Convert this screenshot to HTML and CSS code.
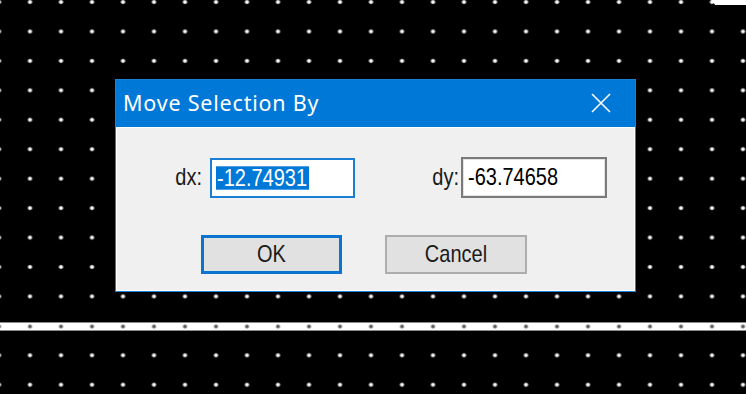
FILE: index.html
```html
<!DOCTYPE html>
<html lang="en">
<head>
    <meta charset="UTF-8">
    <title>Move Selection By</title>
    <link rel="stylesheet" href="styles.css">
</head>
<body>

    <!-- Drawing canvas -->
    <div class="canvas">
        <div class="corner-mark"></div>
        <div class="rule"></div>

        <!-- Dialog window -->
        <div class="dialog">
            <div class="titlebar">
                <span class="title">Move Selection By</span>
                <svg class="close" width="20" height="20" viewBox="0 0 20 20">
                    <path d="M1 1 L19 19 M19 1 L1 19" stroke="#fff" stroke-width="1.6" fill="none"/>
                </svg>
            </div>

            <div class="dialog-body">
                <div class="fields">
                    <div class="field field-dx">
                        <span class="label"><span class="tall">dx:</span></span>
                        <div class="input focused"><span class="tall selected">-12.74931</span></div>
                    </div>
                    <div class="field field-dy">
                        <span class="label"><span class="tall">dy:</span></span>
                        <div class="input"><span class="tall">-63.74658</span></div>
                    </div>
                </div>

                <div class="buttons">
                    <button class="btn default"><span class="tall">OK</span></button>
                    <button class="btn"><span class="tall">Cancel</span></button>
                </div>
            </div>
        </div>
    </div>

</body>
</html>
```

FILE: styles.css
```css
/* Page / canvas */
body {
    margin: 0;
    background: #000;
    overflow: hidden;
}

.canvas {
    position: relative;
    width: 746px;
    height: 394px;
    background-color: #000;
    background-image: radial-gradient(circle, #fff 0, #f4f4f4 1.1px, rgba(255, 255, 255, 0.55) 2px, transparent 2.6px);
    background-size: 31px 29.44px;
    background-position: 14.5px -12.7px;
}

/* White line drawn across the canvas */
.rule {
    position: absolute;
    left: 0;
    right: 0;
    top: 322px;
    height: 7px;
    background-color: #fff;
    border-top: 1px solid #8a8a8a;
    border-bottom: 1px solid #8a8a8a;
    background-image: radial-gradient(circle, #555 0, #666 1.2px, rgba(100, 100, 100, 0.45) 2px, transparent 2.6px);
    background-size: 31px 7px;
    background-position: 14.5px 0;
}

.corner-mark {
    position: absolute;
    top: 0;
    left: 711px;
    width: 35px;
    height: 5px;
    background: #fff;
    clip-path: polygon(0 0, 100% 0, 100% 100%, 12% 100%);
}

/* Dialog */
.dialog {
    position: absolute;
    left: 115px;
    top: 79px;
    width: 519px;
    height: 211px;
    border: 1px solid #1a82d6;
    background: #f0f0f0;
    display: flex;
    flex-direction: column;
}

.titlebar {
    height: 47px;
    background: #0078d7;
    display: flex;
    align-items: center;
    justify-content: space-between;
    padding: 0 24px 0 7px;
    flex-shrink: 0;
}

.title {
    font-family: "Noto Sans", "Open Sans", sans-serif;
    font-size: 21.5px;
    letter-spacing: 0.8px;
    color: #fff;
    margin-top: -2px;
}

.close {
    display: block;
    margin-top: -1px;
}

.dialog-body {
    flex: 1;
    border-top: 1px solid #fff;
    box-shadow: inset 1px 0 0 #fff, inset -1px 0 0 #fff, inset 0 -1px 0 #fff;
}

/* Fields */
.tall {
    display: inline-block;
    transform: scaleY(1.17);
}

.fields {
    display: flex;
    padding-top: 29px;
    font-family: "Liberation Sans", Arial, sans-serif;
    font-size: 20px;
    color: #000;
}

.field {
    display: flex;
    align-items: center;
    justify-content: flex-end;
}

.field-dx {
    width: 239px;
}

.field-dy {
    width: 252px;
}

.field-dx .label {
    margin-right: 8px;
}

.field-dy .label {
    margin-right: 2px;
}

.label {
    color: #1a1a1a;
}

.input {
    box-sizing: border-box;
    width: 145px;
    height: 40px;
    background: #fff;
    border: 2px solid #7a7a7a;
    box-shadow: inset 0 0 0 1px #e3e3e3;
    display: flex;
    align-items: center;
    padding-left: 5px;
}

.field-dy .input {
    width: 146px;
    height: 41px;
}

.input.focused {
    border-color: #1a7fd4;
    box-shadow: none;
    padding-left: 4px;
}

.selected {
    background: #0078d7;
    color: #fff;
    padding: 0 2px 0 1px;
    line-height: 20px;
}

/* Buttons */
.buttons {
    display: flex;
    gap: 43px;
    padding: 37px 0 0 85px;
}

.btn {
    box-sizing: border-box;
    width: 142px;
    height: 39px;
    background: #e1e1e1;
    border: 2px solid #adadad;
    font-family: "Liberation Sans", Arial, sans-serif;
    font-size: 20px;
    color: #1a1a1a;
    padding: 0;
    cursor: pointer;
}

.btn.default {
    width: 141px;
    border: 3px solid #0a74d0;
}
```
